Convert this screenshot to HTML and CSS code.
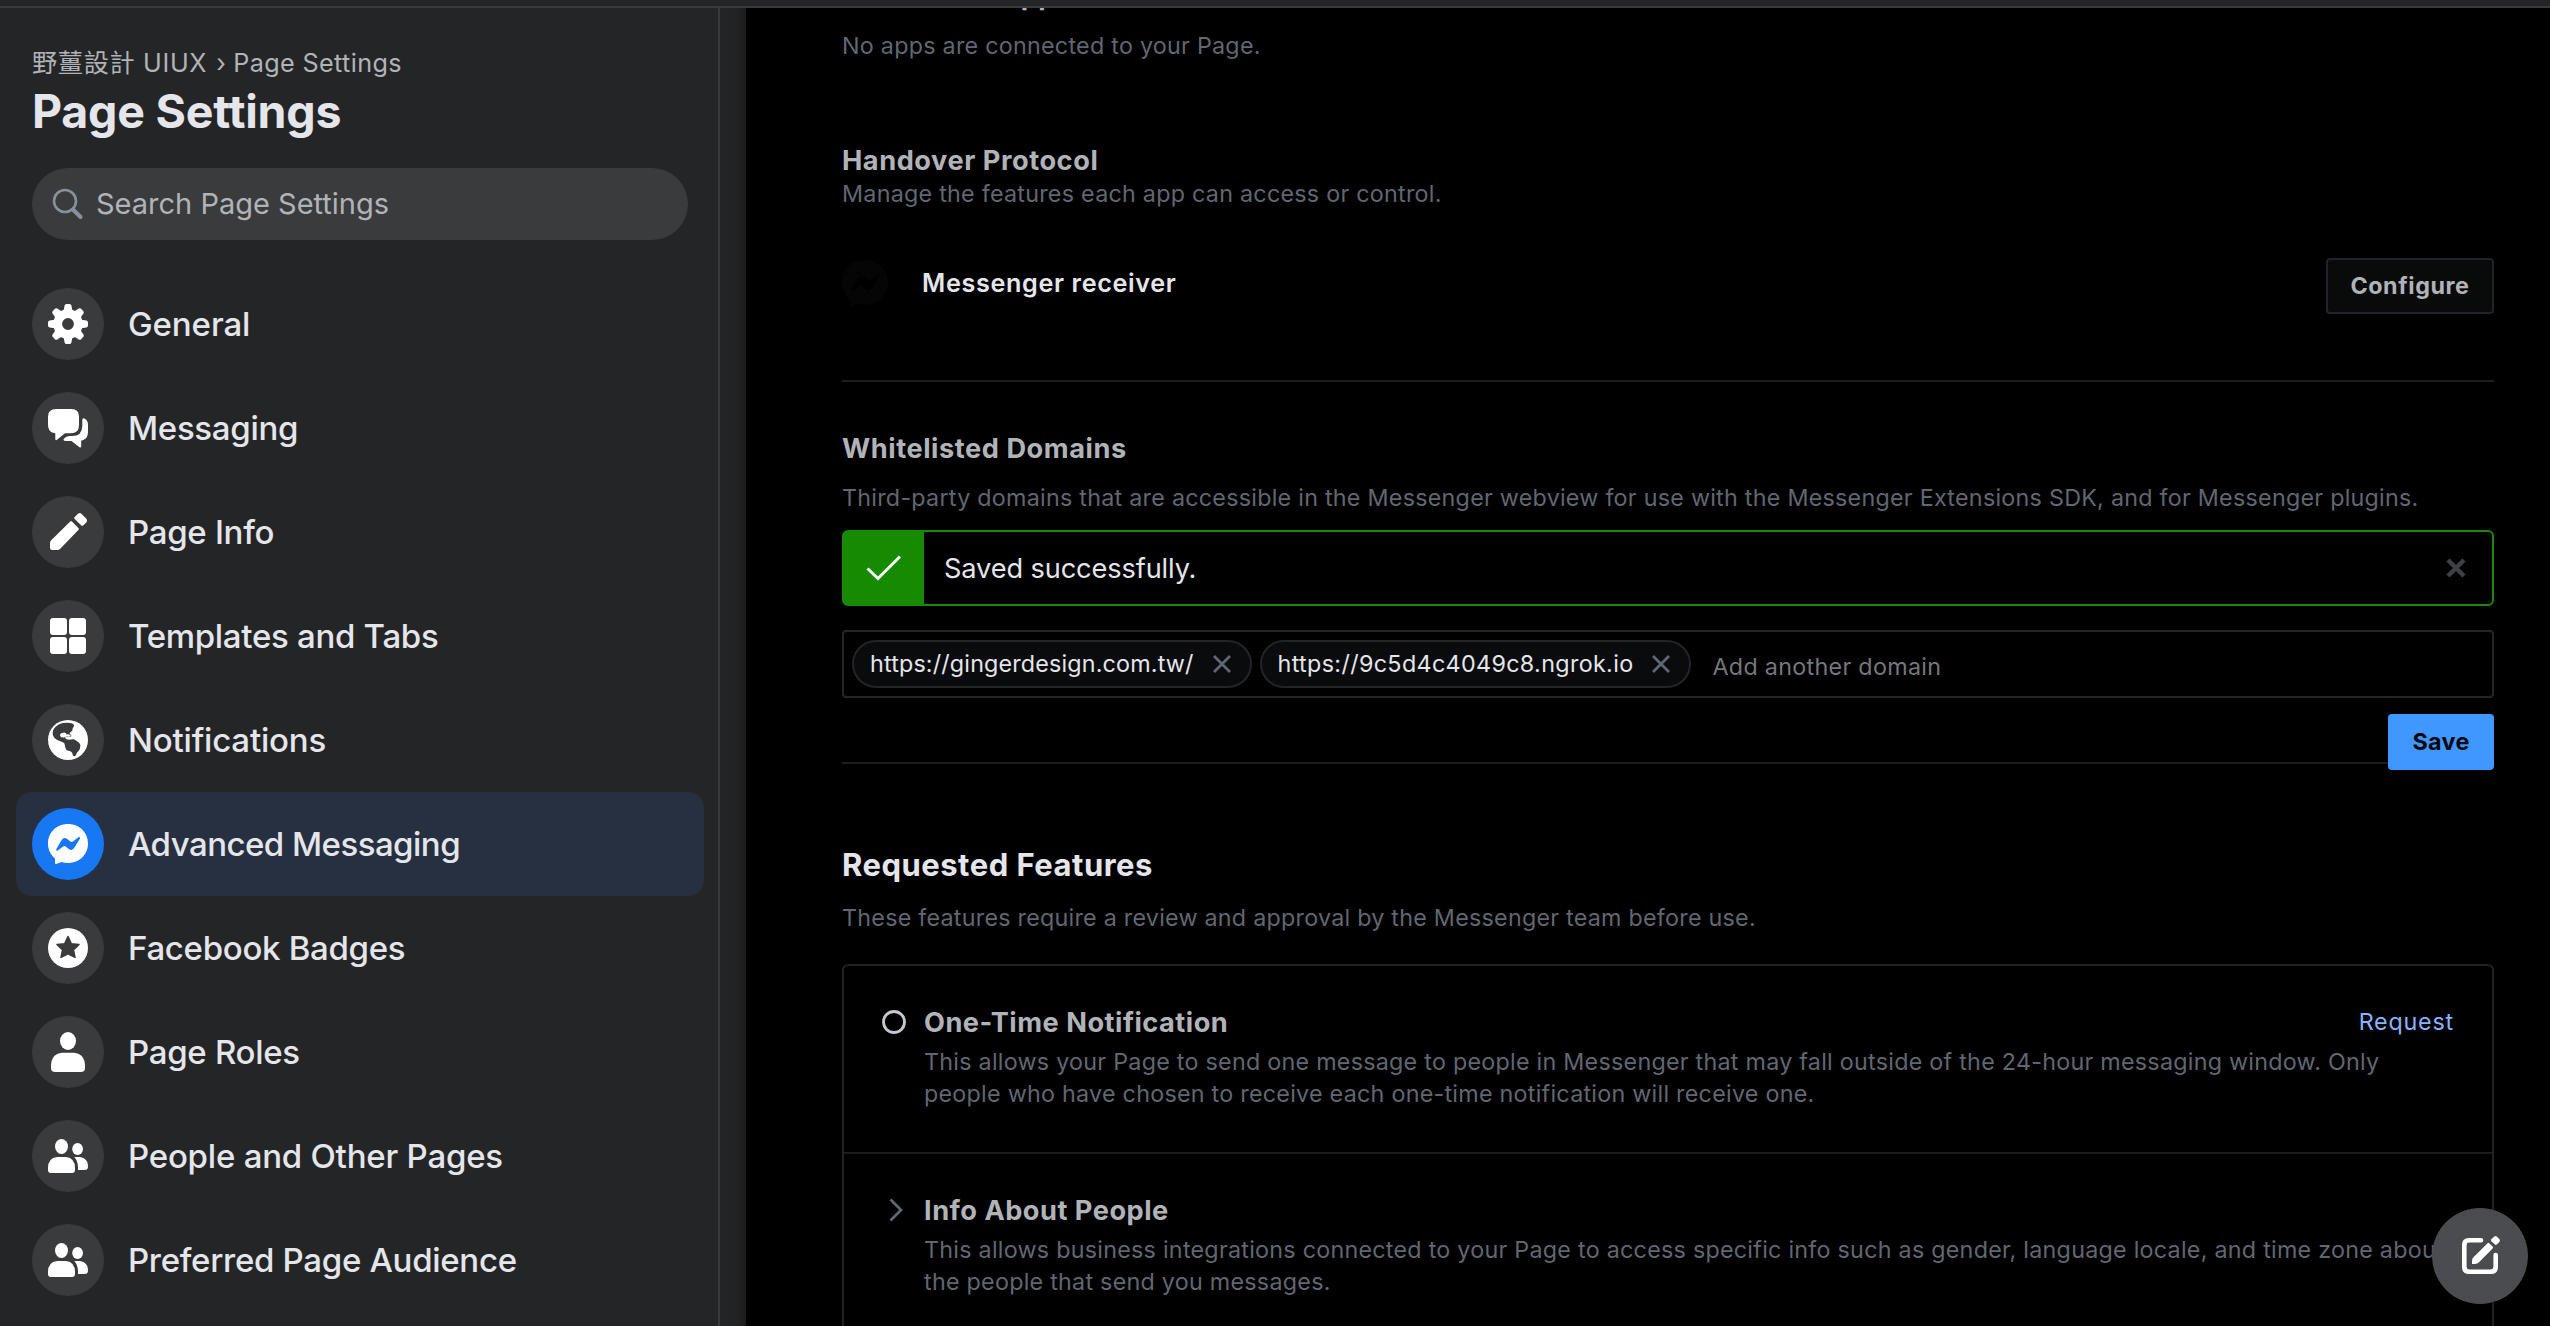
FILE: index.html
```
<!DOCTYPE html>
<html lang="en">
<head>
<meta charset="utf-8">
<title>Page Settings</title>
<link rel="stylesheet" href="styles.css">
</head>
<body>
<div class="topbar"></div>
<div class="layout">
  <aside class="sidebar">
    <div class="crumbs"><span class="crumb-page">野薑設計 UIUX</span><span class="crumb-sep">›</span><span>Page Settings</span></div>
    <h1 class="title">Page Settings</h1>
    <div class="search">
      <svg class="search-icon" viewBox="0 0 32 32"><circle cx="13" cy="13" r="11" fill="none" stroke="#8a8f9c" stroke-width="2.6"/><path d="M21 21.5 28.5 29" stroke="#8a8f9c" stroke-width="4" stroke-linecap="round"/></svg>
      <span>Search Page Settings</span>
    </div>
    <nav class="nav">
      <a class="item"><span class="disc"><svg viewBox="0 0 40 40"><g fill="#fff"><g id="teeth"><path id="tooth" d="M15.4 8 16.6 1.6Q17 0 18.5 0H21.5Q23 0 23.4 1.6L24.6 8Z"/><use href="#tooth" transform="rotate(90 20 20)"/><use href="#tooth" transform="rotate(180 20 20)"/><use href="#tooth" transform="rotate(270 20 20)"/></g><use href="#teeth" transform="rotate(45 20 20)"/></g><circle cx="20" cy="20" r="10.3" fill="none" stroke="#fff" stroke-width="8.8"/></svg></span><span class="label general">General</span></a>
      <a class="item"><span class="disc"><svg viewBox="0 0 40 40" fill="#fff"><path d="M8 1H23.500Q31 1 31 8.500V17Q31 25.300 23 25.300H17L9 31.800Q7.300 32.900 7.300 31V25.200Q0 24.500 0 17V8.500Q0 1 8 1Z"/><path d="M34.300 12Q34.300 9.800 36.400 10.500Q40 12.200 40 17V24Q40 31 34 32.400L33.200 32.600V38.500Q33 40 31.500 39.300L23.500 33H17.500Q14.800 32.800 15.800 30.800Q18 28 21.500 28H24Q34.300 28 34.300 18Z"/></svg></span><span class="label messaging">Messaging</span></a>
      <a class="item"><span class="disc"><svg viewBox="0 0 40 40" fill="#fff"><path d="M22.200 9.500Q23 8.700 23.900 9.500L30.600 16.200Q31.300 17 30.600 17.800L12.500 36.500Q11 38 9 38H4Q2 38 2 36V31Q2 29.500 3.200 28.300Z"/><path d="M26.500 5.200 30 1.800Q31.700 .3 33.400 1.800L38.400 6.800Q39.900 8.500 38.400 10.200L35.200 13.400Q34.200 14.200 33.300 13.400L26.500 6.800Q25.800 6 26.500 5.200Z"/></svg></span><span class="label">Page Info</span></a>
      <a class="item"><span class="disc"><svg viewBox="0 0 40 40" fill="#fff"><rect x="2" y="2" width="17" height="17" rx="3"/><rect x="21" y="2" width="17" height="17" rx="3"/><rect x="2" y="21" width="17" height="17" rx="3"/><rect x="21" y="21" width="17" height="17" rx="3"/></svg></span><span class="label">Templates and Tabs</span></a>
      <a class="item"><span class="disc"><svg viewBox="0 0 40 40"><circle cx="20" cy="20" r="20" fill="#fff"/><path fill="#3a3b3c" d="M4.700 13C5 7 11 3 18 2.800C22 2.600 25 3.200 26 5C26.500 6.500 24 8 24.500 10C24.500 11 22.500 11.500 21.500 13.500L23.500 15.500Q23.500 17 21 17Q18 16.500 17 17.500Q12 17.500 12 15.500C12 13.500 14 14.500 17.500 14.300Q18.500 13 16.500 12.700C14 12.500 11.800 13.500 12 15.500C12 17.400 15 17.600 17 17.500C17.500 19 19 19.800 20.500 19.600C22 20 24 18.800 26 19.300C28.500 21 31.500 22.500 32.200 24.500C32.500 27 32 29.500 30.500 31C28.500 32.500 28.500 34.800 27.200 36C25.500 36.600 24.600 35.500 24.400 33.500C24 31.500 21 31 19 30.300C17 29 17.300 25.500 16.200 23C13 21 9 20.500 7 18.500C5.500 17 4.600 15 4.700 13Z"/><path fill="#fff" d="M12 15.700Q12 12.700 16 12.700Q19 12.800 18.200 14.500Q20.500 14 22.500 15.200Q23.500 16.500 21 16.700Q18 16.300 16.500 17.300Q12.500 17.800 12 15.700Z"/></svg></span><span class="label notif">Notifications</span></a>
      <a class="item active"><span class="disc"><svg viewBox="0 0 40 40"><path fill="#fff" d="M20 0C31.300 0 40 8.300 40 19.500S31.300 39 20 39Q16.500 39 13.300 38L8.300 40Q7 40.300 7 39V34.500C2.300 30.500 0 25.500 0 19.500C0 8.300 8.700 0 20 0Z"/><path fill="#1877f2" d="M8.200 25.200 13.500 16.200Q15.800 12.600 19.200 15L22.800 17.800Q23.600 18.300 24.400 17.800L30.500 13.300Q32.200 12.400 32 14.500L26.500 23.600Q24.200 27.300 20.800 25L17.200 22.200Q16.400 21.700 15.600 22.200L9.700 26.600Q8 27.300 8.200 25.200Z"/></svg></span><span class="label adv">Advanced Messaging</span></a>
      <a class="item"><span class="disc"><svg viewBox="0 0 40 40"><circle cx="20" cy="20" r="20" fill="#fff"/><path fill="#3a3b3c" stroke="#3a3b3c" stroke-width="1.600" stroke-linejoin="round" d="M20 8.700 23.300 15.800 31 16.500 25.400 21.800 27 29.300 20 25.700 13 29.300 14.600 21.800 9 16.500 16.700 15.800Z"/></svg></span><span class="label">Facebook Badges</span></a>
      <a class="item"><span class="disc"><svg viewBox="0 0 40 40" fill="#fff"><rect x="12" y="0" width="16" height="18" rx="8" ry="9"/><path d="M14 20.800H26Q37 22 37 34.500V36Q37 40 33 40H7Q3 40 3 36V34.500Q3 22 14 20.800Z"/></svg></span><span class="label">Page Roles</span></a>
      <a class="item"><span class="disc"><svg viewBox="0 0 40 40" fill="#fff"><g id="people"><ellipse cx="13.500" cy="10.500" rx="6.500" ry="7.500"/><path d="M9 21H18Q27 22 27 32V34Q27 37 24 37H3Q0 37 0 34V32Q0 22 9 21Z"/><ellipse cx="29.600" cy="13" rx="5.400" ry="6"/><path d="M26.300 21H32Q40 22 40 30.500Q40 34 36.500 34H30V31Q29.700 24.500 26.300 21Z"/></g></svg></span><span class="label people">People and Other Pages</span></a>
      <a class="item"><span class="disc"><svg viewBox="0 0 40 40" fill="#fff"><use href="#people"/></svg></span><span class="label">Preferred Page Audience</span></a>
    </nav>
  </aside>
  <div class="gutter"></div>
  <main class="main">
    <h3 class="h3 connected">Connected Apps</h3>
    <p class="desc noapps">No apps are connected to your Page.</p>
    <h3 class="h3 handover">Handover Protocol</h3>
    <p class="desc manage">Manage the features each app can access or control.</p>
    <div class="receiver">
      <svg class="messenger" viewBox="0 0 46 46"><path fill="#050505" d="M23 0C36 0 46 9.500 46 22.300S36 45 23 45Q19 45 15.300 43.700L9.500 46Q8 46.300 8 45V39.700C2.600 35 0 29.300 0 22.300C0 9.500 10 0 23 0Z"/><path fill="#000" d="M9.400 29 15.500 18.600Q18.200 14.500 22 17.300L26.200 20.500Q27.100 21 28 20.500L35 15.300Q37 14.300 36.800 16.700L30.500 27.100Q27.800 31.400 23.900 28.800L19.800 25.500Q18.900 25 18 25.500L11.200 30.600Q9.200 31.400 9.400 29Z"/></svg>
      <span class="receiver-name">Messenger receiver</span>
      <button class="btn configure">Configure</button>
    </div>
    <div class="rule"></div>
    <h3 class="h3 whitelist">Whitelisted Domains</h3>
    <p class="desc third">Third-party domains that are accessible in the Messenger webview for use with the Messenger Extensions SDK, and for Messenger plugins.</p>
    <div class="alert">
      <div class="alert-mark"><svg viewBox="0 0 36 26"><path d="M1.500 13.500 12 23.500 34 1.500" fill="none" stroke="#fff" stroke-width="3"/></svg></div>
      <span class="alert-text">Saved successfully.</span>
      <svg class="alert-close" viewBox="0 0 20 20"><path d="M2 2 18 18M18 2 2 18" stroke="#3f4147" stroke-width="4.500"/></svg>
    </div>
    <div class="tokens">
      <span class="chip"><span class="chip-a">https://gingerdesign.com.tw/</span><svg viewBox="0 0 18 18"><path d="M1 1 17 17M17 1 1 17" stroke="#606774" stroke-width="2.800"/></svg></span>
      <span class="chip"><span class="chip-b">https://9c5d4c4049c8.ngrok.io</span><svg viewBox="0 0 18 18"><path d="M1 1 17 17M17 1 1 17" stroke="#606774" stroke-width="2.800"/></svg></span>
      <span class="placeholder">Add another domain</span>
    </div>
    <div class="save-row"><button class="btn save">Save</button></div>
    <div class="rule under-save"></div>
    <h2 class="h2">Requested Features</h2>
    <p class="desc these">These features require a review and approval by the Messenger team before use.</p>
    <section class="card">
      <div class="feature">
        <svg class="mark" viewBox="0 0 24 24"><circle cx="12" cy="12" r="10.500" fill="none" stroke="#c3c8d0" stroke-width="2.800"/></svg>
        <div class="feature-body">
          <div class="feature-head"><h3 class="h3">One-Time Notification</h3><a class="request">Request</a></div>
          <p class="desc">This allows your Page to send one message to people in Messenger that may fall outside of the 24-hour messaging window. Only<br>people who have chosen to receive each one-time notification will receive one.</p>
        </div>
      </div>
      <div class="feature">
        <svg class="mark" viewBox="0 0 24 24"><path d="M8.500 1.500 19 12 8.500 22.500" fill="none" stroke="#606774" stroke-width="2.800"/></svg>
        <div class="feature-body">
          <div class="feature-head"><h3 class="h3">Info About People</h3></div>
          <p class="desc">This allows business integrations connected to your Page to access specific info such as gender, language locale, and time zone about<br>the people that send you messages.</p>
        </div>
      </div>
    </section>
  </main>
</div>
<button class="fab"><svg viewBox="0 0 96 96"><path d="M49 32.300H37Q32.300 32.300 32.300 37V59Q32.300 63.700 37 63.700H59Q63.700 63.700 63.700 59V47" fill="none" stroke="#fff" stroke-width="4.600" stroke-linecap="round"/><path fill="#fff" d="M55.300 35.400Q56.300 34.300 57.400 35.400L60.600 38.400Q61.600 39.400 60.600 40.500L47 54.300Q45.300 56 43 56H40V53Q40 50.700 41.700 49Z"/><path fill="#fff" d="M59.400 31.200 62 28.700Q63.500 27.400 65 28.700L67.300 31Q68.600 32.500 67.300 34L64.800 36.600Q63.800 37.400 62.900 36.600L59.400 33.200Q58.600 32.200 59.400 31.200Z"/></svg></button>
</body>
</html>
```
FILE: styles.css
```
* { box-sizing: border-box; }
html, body { height: 100%; margin: 0; }
body {
  display: flex;
  flex-direction: column;
  overflow: hidden;
  background: #000;
  color: #e4e6eb;
  font-family: Inter, "Noto Sans CJK TC", sans-serif;
}
h1, h2, h3, p { margin: 0; }
svg { display: block; flex: none; }
button { font-family: inherit; padding: 0; }

.topbar { flex: none; height: 8px; background: #242526; border-bottom: 2px solid #3a3b3c; }
.layout { flex: 1; min-height: 0; display: flex; }

/* Sidebar */
.sidebar { flex: none; width: 720px; overflow: hidden; background: #242526; border-right: 2px solid #38393a; padding: 39px 14px 0 16px; }
.crumbs { display: flex; height: 32px; padding-left: 16px; font-size: 25.2px; line-height: 32px; letter-spacing: .37px; color: #b0b3b8; white-space: nowrap; }
.crumb-page { letter-spacing: .65px; }
.crumb-sep { margin: 0 7px 0 9px; }
.title { margin-top: 4px; padding-left: 16px; font-size: 46.5px; line-height: 56px; font-weight: 700; letter-spacing: -.22px; color: #e4e6eb; }
.search { display: flex; align-items: center; height: 72px; margin: 29px 16px 0 16px; padding: 0 20px 2px; border-radius: 36px; background: #3a3b3c; font-size: 29px; color: #b0b3b8; }
.search-icon { width: 32px; height: 32px; margin: 2px 12px 0 0; }
.nav { margin-top: 32px; }
.item { display: flex; align-items: center; width: 688px; height: 104px; padding-left: 16px; border-radius: 16px; }
.item.active { background: #263040; }
.disc { display: flex; align-items: center; justify-content: center; flex: none; width: 72px; height: 72px; margin-right: 24px; border-radius: 50%; background: #3a3b3c; }
.active .disc { background: #1877f2; }
.disc svg { width: 40px; height: 40px; overflow: visible; }
.label { font-size: 33px; font-weight: 500; letter-spacing: -.3px; white-space: nowrap; }
.general { letter-spacing: -.1px; }
.messaging { letter-spacing: -.3px; }
.notif { letter-spacing: -.2px; }
.adv { letter-spacing: -.53px; }
.people { letter-spacing: -.22px; }

.gutter { flex: none; width: 26px; background: linear-gradient(90deg, #242526 0, #222325 60%, #1b1c1e 100%); }

/* Main column */
.main { flex: 1; min-width: 0; overflow: hidden; padding: 0 56px 0 96px; }
.h3 { font-size: 27.2px; line-height: 32px; font-weight: 700; letter-spacing: .55px; color: #b0b3b8; white-space: nowrap; }
.h2 { margin-top: 81px; font-size: 31px; line-height: 40px; font-weight: 700; letter-spacing: .5px; color: #e4e6eb; }
.desc { font-size: 23.3px; line-height: 32px; letter-spacing: .255px; color: #606770; white-space: nowrap; }
.connected { margin-top: -28px; }
.noapps { margin-top: 18px; }
.handover { margin-top: 83px; }
.manage { margin-top: 1px; }
.receiver { display: flex; height: 56px; margin-top: 48px; }
.messenger { width: 46px; height: 46px; margin-top: 2px; }
.receiver-name { margin: 9px auto 0 34px; font-size: 25.2px; line-height: 32px; font-weight: 600; letter-spacing: .65px; color: #e4e6eb; }
.btn { height: 56px; border-radius: 4px; font-size: 23.3px; }
.configure { width: 168px; padding-bottom: 2px; border: 2px solid #202327; background: #090b0b; color: #b0b3b8; font-weight: 700; letter-spacing: .6px; }
.rule { height: 2px; margin-top: 66px; background: #1c1c1d; }
.whitelist { margin-top: 51px; }
.third { margin-top: 17px; }
.alert { display: flex; align-items: center; height: 76px; margin-top: 16px; border: 2px solid #168b00; border-radius: 6px; }
.alert-mark { display: flex; align-items: center; justify-content: center; align-self: stretch; width: 80px; background: #168b00; }
.alert-mark svg { width: 36px; height: 26px; }
.alert-text { margin: 0 auto 0 20px; font-size: 27.2px; letter-spacing: -.12px; color: #e4e6eb; }
.alert-close { width: 20px; height: 20px; margin-right: 26px; }
.tokens { display: flex; align-items: center; gap: 8px; height: 68px; margin-top: 24px; padding-left: 8px; border: 2px solid #252627; border-radius: 4px; font-size: 23.3px; }
.chip { display: flex; align-items: center; gap: 19px; height: 48px; padding: 0 19px 0 16px; border: 2px solid #222427; border-radius: 24px; background: #0a0b0d; color: #e4e6eb; white-space: nowrap; }
.chip span { padding-bottom: 1px; }
.chip svg { width: 18px; height: 18px; }
.chip-a { letter-spacing: .17px; }
.chip-b { letter-spacing: .35px; }
.placeholder { margin: 5px 0 0 13px; letter-spacing: .3px; color: #75777b; }
.save-row { display: flex; justify-content: flex-end; margin-top: 16px; }
.save { position: relative; z-index: 1; width: 106px; padding-bottom: 2px; border: 0; background: #3f97ff; color: #05080d; font-weight: 700; letter-spacing: .36px; }
.under-save { margin-top: -8px; }
.these { margin-top: 17px; letter-spacing: .245px; }

/* Feature list */
.card { height: 420px; margin-top: 30px; border: 2px solid #202124; border-radius: 6px; }
.feature { display: flex; height: 188px; padding: 40px 38px 0; border-bottom: 2px solid #1c1c1d; }
.mark { width: 24px; height: 24px; margin: 4px 18px 0 0; }
.feature-body { flex: 1; min-width: 0; }
.feature-head { display: flex; justify-content: space-between; height: 32px; margin-bottom: 8px; }
.feature-head .h3 { margin-top: 1px; letter-spacing: .5px; }
.request { font-size: 23.3px; line-height: 32px; letter-spacing: .8px; color: #8db2ff; }

.fab { position: absolute; right: 22px; bottom: 22px; z-index: 2; width: 96px; height: 96px; border: 0; border-radius: 50%; background: #4b4c4f; }
.fab svg { width: 96px; height: 96px; }
```
